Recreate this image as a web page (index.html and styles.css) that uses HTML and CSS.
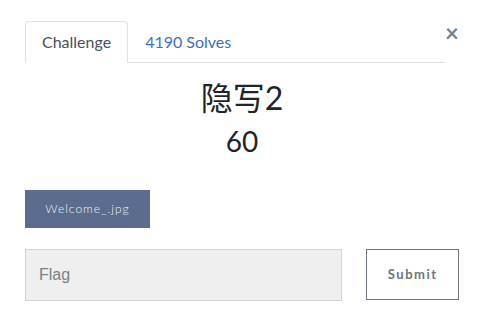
FILE: index.html
```html
<!DOCTYPE html>
<html lang="zh">
<head>
<meta charset="utf-8">
<title>Challenge</title>
<link rel="stylesheet" href="styles.css">
</head>
<body>
<div class="modal">
  <div class="header">
    <ul class="nav">
      <li class="tab active">Challenge</li>
      <li class="tab link">4190 Solves</li>
    </ul>
    <button class="close" type="button">×</button>
  </div>
  <h2 class="name">隐写2</h2>
  <h3 class="value">60</h3>
  <div class="files">
    <a class="file">Welcome_.jpg</a>
  </div>
  <form class="submit-row">
    <input class="flag" type="text" placeholder="Flag">
    <button class="submit" type="button">Submit</button>
  </form>
</div>
</body>
</html>
```

FILE: styles.css
```css
* { box-sizing: border-box; }
html, body {
  margin: 0;
  background: #fff;
}
body {
  font-family: Lato, "Noto Sans CJK SC", sans-serif;
  font-size: 16px;
  color: #212529;
}
.modal {
  padding: 21px 23px 0 25px;
}
.header {
  display: flex;
  align-items: flex-start;
}
.nav {
  flex: 1;
  display: flex;
  list-style: none;
  margin: 0;
  padding: 0;
  border-bottom: 1px solid #dee2e6;
}
.tab {
  margin-bottom: -1px;
  padding: 8px 16px;
  line-height: 24px;
  border: 1px solid transparent;
  border-radius: 4px 4px 0 0;
}
.tab.active {
  color: #495057;
  background: #fff;
  border-color: #dee2e6 #dee2e6 #fff;
}
.tab.link {
  color: #3b6fc6;
}
.close {
  width: 14px;
  padding: 0;
  margin: 0;
  border: 0;
  background: none;
  font-family: Lato, sans-serif;
  font-size: 24px;
  font-weight: 700;
  line-height: 24px;
  color: #000;
  opacity: .5;
  text-align: center;
}
.name {
  margin: 0 0 8px;
  padding-top: 16px;
  font-size: 32px;
  font-weight: 400;
  line-height: 1.2;
  text-align: center;
  font-family: Lato, "Noto Sans CJK SC", sans-serif;
}
.value {
  margin: 0 0 8px;
  font-size: 28px;
  font-weight: 400;
  line-height: 1.2;
  text-align: center;
}
.files {
  margin-top: 31px;
  display: flex;
}
.file {
  display: flex;
  align-items: center;
  justify-content: center;
  width: 125px;
  height: 38px;
  background: #5b6c8f;
  color: #f2f3f6;
  font-size: 12px;
  font-weight: 300;
  letter-spacing: 1px;
}
.submit-row {
  margin: 21px 0 0;
  display: flex;
  align-items: flex-start;
  gap: 24px;
}
.flag {
  width: 319px;
  height: 52px;
  margin: 0;
  padding: 0 13px;
  background: #efefef;
  border: 1px solid #ced4da;
  font-family: "Liberation Sans", Arial, sans-serif;
  font-size: 16px;
  color: #495057;
}
.flag::placeholder {
  color: #7b8087;
}
.submit {
  width: 93px;
  height: 51px;
  margin: 0;
  background: #fff;
  border: 1px solid #6c757d;
  border-radius: 0;
  color: #6c757d;
  font-family: Lato, sans-serif;
  font-size: 13px;
  font-weight: 700;
  letter-spacing: 1.5px;
}
```
